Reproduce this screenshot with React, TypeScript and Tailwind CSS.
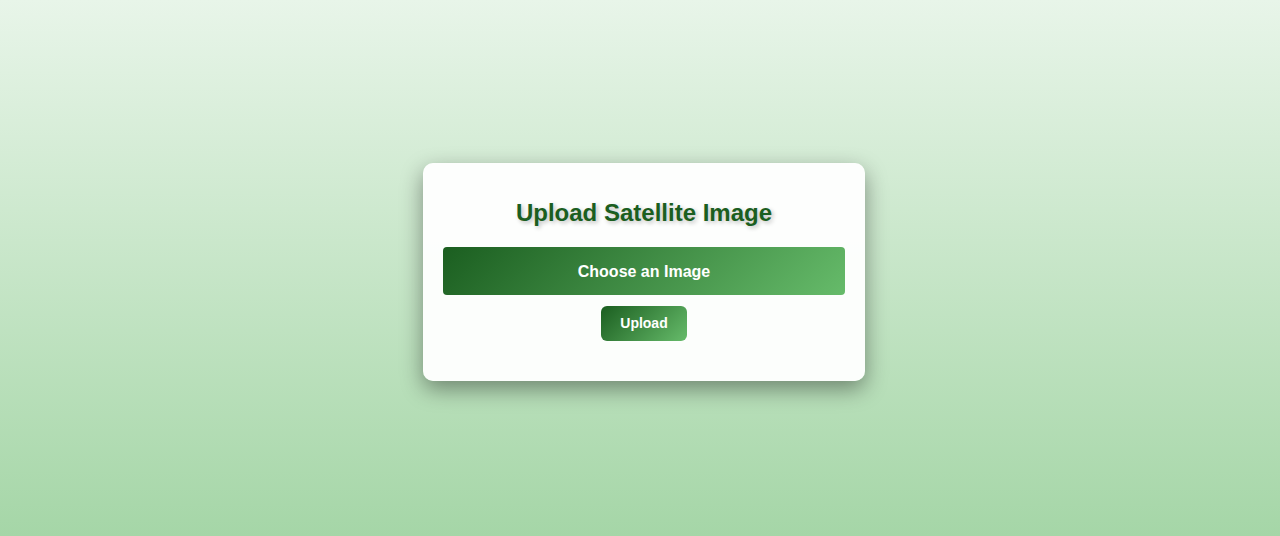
export default function App() {
  return (
    <div className="min-h-screen h-[536px] pt-[8px] pl-[8px] flex items-center justify-center bg-gradient-to-b from-[#e8f5e9] to-[#a5d6a7] font-['Liberation_Sans',Arial,sans-serif]">
      {/* Upload Card */}
      <div className="w-[442px] bg-white/95 rounded-[10px] px-5 pt-[36px] pb-[40px] shadow-[0_8px_22px_rgba(0,0,0,0.4)] flex flex-col items-center">
        <h2 className="text-[24px] leading-[28px] font-bold text-[#1b5e20] [text-shadow:2px_2px_4px_rgba(0,0,0,0.25)]">
          Upload Satellite Image
        </h2>

        <label className="mt-[20px] w-full h-[48px] pt-[2px] flex items-center justify-center rounded-[4px] bg-[linear-gradient(135deg,#1b5e20,#66bb6a)] text-white text-[16px] font-bold cursor-pointer">
          Choose an Image
          <input type="file" className="hidden" />
        </label>

        <button
          type="button"
          className="mt-[11px] h-[35px] px-[19px] rounded-[6px] bg-[linear-gradient(135deg,#1b5e20,#66bb6a)] text-white text-[14px] font-bold"
        >
          Upload
        </button>
      </div>
    </div>
  );
}
